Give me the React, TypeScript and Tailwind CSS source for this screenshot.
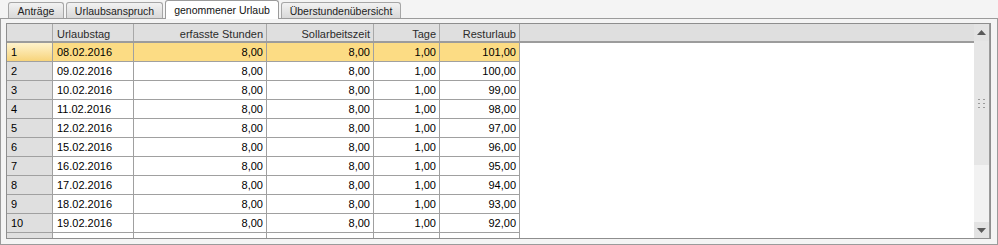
import React from "react";

const tabs = [
  { label: "Anträge", active: false, w: "w-[56px]" },
  { label: "Urlaubsanspruch", active: false, w: "w-[97px]" },
  { label: "genommener Urlaub", active: true, w: "w-[114px]" },
  { label: "Überstundenübersicht", active: false, w: "w-[120px]" },
];

const rows = [
  ["08.02.2016", "101,00"],
  ["09.02.2016", "100,00"],
  ["10.02.2016", "99,00"],
  ["11.02.2016", "98,00"],
  ["12.02.2016", "97,00"],
  ["15.02.2016", "96,00"],
  ["16.02.2016", "95,00"],
  ["17.02.2016", "94,00"],
  ["18.02.2016", "93,00"],
  ["19.02.2016", "92,00"],
  ["22.02.2016", "91,00"],
];

const Tabs = () => (
  <div className="flex items-end h-[18px] pl-[8px] gap-[2px] text-[10.5px]">
    {tabs.map((t) =>
      t.active ? (
        <div
          key={t.label}
          className={`${t.w} relative z-10 h-[19px] -mb-[1px] pt-[2px] text-center bg-white border border-b-0 border-[#9b9b9b] rounded-t-[3px] text-[#111]`}
        >
          {t.label}
        </div>
      ) : (
        <div
          key={t.label}
          className={`${t.w} h-[16px] pt-[1px] text-center bg-gradient-to-b from-[#f2f2f2] to-[#d9d9d9] border border-b-0 border-[#a6a6a6] rounded-t-[3px] text-[#222]`}
        >
          {t.label}
        </div>
      )
    )}
  </div>
);

const Header = () => (
  <div className="flex h-[20px] bg-[#dfdfdf] border-b-2 border-[#9c9c9c] text-[#2b2b2b]">
    <div className="w-[46px] border-r border-[#a8a8a8]" />
    <div className="w-[81px] border-r border-[#a8a8a8] pl-[4px] pt-[3px]">Urlaubstag</div>
    <div className="w-[133px] border-r border-[#a8a8a8] pr-[3px] pt-[3px] text-right">erfasste Stunden</div>
    <div className="w-[107px] border-r border-[#a8a8a8] pr-[3px] pt-[3px] text-right">Sollarbeitszeit</div>
    <div className="w-[66px] border-r border-[#a8a8a8] pr-[3px] pt-[3px] text-right">Tage</div>
    <div className="w-[80px] border-r border-[#a8a8a8] pr-[3px] pt-[3px] text-right">Resturlaub</div>
    <div className="flex-1" />
  </div>
);

const Row = ({ i, date, rest }: { i: number; date: string; rest: string }) => {
  const sel = i === 0;
  const cell = sel ? "bg-[#fcdc84]" : "bg-white";
  return (
    <div className="flex h-[19px] shrink-0 text-black">
      <div
        className={`w-[46px] border-r border-b border-[#a0a0a0] pl-[4px] pt-[2px] ${
          sel ? "bg-gradient-to-b from-[#fff3cc] to-[#f7d47a]" : "bg-[#dfdfdf]"
        }`}
      >
        {i + 1}
      </div>
      <div className={`w-[81px] border-r border-b border-[#a0a0a0] pl-[4px] pt-[2px] ${cell}`}>{date}</div>
      <div className={`w-[133px] border-r border-b border-[#a0a0a0] pr-[3px] pt-[2px] text-right ${cell}`}>8,00</div>
      <div className={`w-[107px] border-r border-b border-[#a0a0a0] pr-[3px] pt-[2px] text-right ${cell}`}>8,00</div>
      <div className={`w-[66px] border-r border-b border-[#a0a0a0] pr-[3px] pt-[2px] text-right ${cell}`}>1,00</div>
      <div className={`w-[80px] border-r border-b border-[#a0a0a0] pr-[3px] pt-[2px] text-right ${cell}`}>{rest}</div>
      <div className="flex-1 bg-white" />
    </div>
  );
};

const Scrollbar = () => (
  <div className="w-[16px] flex flex-col bg-[#f2f2f2] border-r border-[#9a9a9a]">
    <div className="h-[17px] bg-[#e3e3e3] flex items-center justify-center">
      <svg width="9" height="5" viewBox="0 0 9 5">
        <path d="M0 5 L4.5 0 L9 5 Z" fill="#5a5a5a" />
      </svg>
    </div>
    <div className="h-[124px] bg-[#e6e6e6] flex items-center justify-center">
      <svg width="7" height="9" viewBox="0 0 7 9">
        {[0, 4, 8].map((y) => (
          <g key={y}>
            <rect x="0" y={y} width="2" height="1" fill="#9a9a9a" />
            <rect x="5" y={y} width="2" height="1" fill="#9a9a9a" />
          </g>
        ))}
      </svg>
    </div>
    <div className="flex-1" />
    <div className="h-[16px] bg-[#e3e3e3] flex items-center justify-center">
      <svg width="9" height="5" viewBox="0 0 9 5">
        <path d="M0 0 L4.5 5 L9 0 Z" fill="#5a5a5a" />
      </svg>
    </div>
  </div>
);

export default function App() {
  return (
    <div className="w-[998px] h-[245px] bg-[#f4f4f4] font-['Liberation_Sans',Arial,sans-serif] text-[11px] leading-[14px] overflow-hidden">
      <Tabs />
      <div className="h-[227px] border border-[#9b9b9b] pt-[4px] pl-[5px] pr-[6px] pb-[5px] bg-[#f4f4f4]">
        <div className="h-full border border-[#8e8e8e] flex bg-white">
          <div className="flex-1 flex flex-col overflow-hidden">
            <Header />
            {rows.map((r, i) => (
              <Row key={i} i={i} date={r[0]} rest={r[1]} />
            ))}
          </div>
          <Scrollbar />
        </div>
      </div>
    </div>
  );
}
